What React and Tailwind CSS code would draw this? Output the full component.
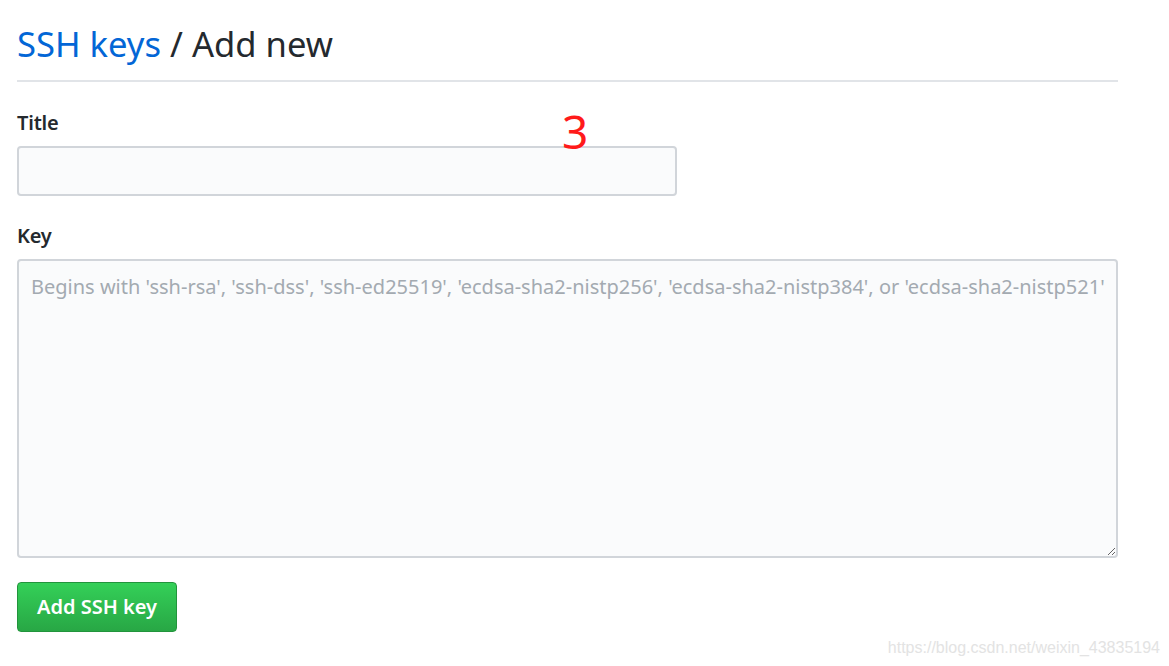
import React from 'react';

export default function App() {
  return (
    <div className="relative w-[1169px] h-[666px] bg-white overflow-hidden font-['Noto_Sans',sans-serif]">
      <div className="w-[1101px] ml-[17px]">
        <div className="pt-[21px] pb-[14px] border-b-2 border-[#e1e4e8]">
          <h1 className="text-[34.6px] leading-[45px] font-normal text-[#24292e]">
            <a className="text-[#0366d6]">SSH keys</a> / Add new
          </h1>
        </div>

        <form className="mt-[28px]">
          <label className="block text-[20px] leading-[26px] font-semibold text-[#24292e] tracking-[-0.2px]">Title</label>
          <input
            type="text"
            className="block mt-[10px] w-[660px] h-[50px] rounded-[4px] border-2 border-[#d1d5da] bg-[#fafbfc] px-3 outline-none"
          />

          <label className="block mt-[27px] text-[20px] leading-[26px] font-semibold text-[#24292e] tracking-[-0.2px]">Key</label>
          <textarea
            className="block mt-[10px] w-full h-[299px] rounded-[4px] border-2 border-[#d1d5da] bg-[#fafbfc] pl-[12px] pr-0 py-[12px] text-[20px] leading-[28px] text-[#24292e] placeholder:text-[#a3aab1] outline-none resize-y"
            placeholder="Begins with 'ssh-rsa', 'ssh-dss', 'ssh-ed25519', 'ecdsa-sha2-nistp256', 'ecdsa-sha2-nistp384', or 'ecdsa-sha2-nistp521'"
          />

          <button
            type="button"
            className="mt-[24px] w-[160px] h-[50px] rounded-[4px] border border-[#22943c] bg-gradient-to-b from-[#34d058] to-[#28a745] text-white text-[20px] font-semibold"
          >
            Add SSH key
          </button>
        </form>
      </div>

      <span className="absolute left-[562px] top-[101px] text-[46px] leading-[60px] text-[#ff1a1a]">3</span>
      <span className="absolute right-[9px] top-[638px] text-[16px] leading-[20px] text-[#e3e3e3] font-['Liberation_Sans',sans-serif]">
        https://blog.csdn.net/weixin_43835194
      </span>
    </div>
  );
}
